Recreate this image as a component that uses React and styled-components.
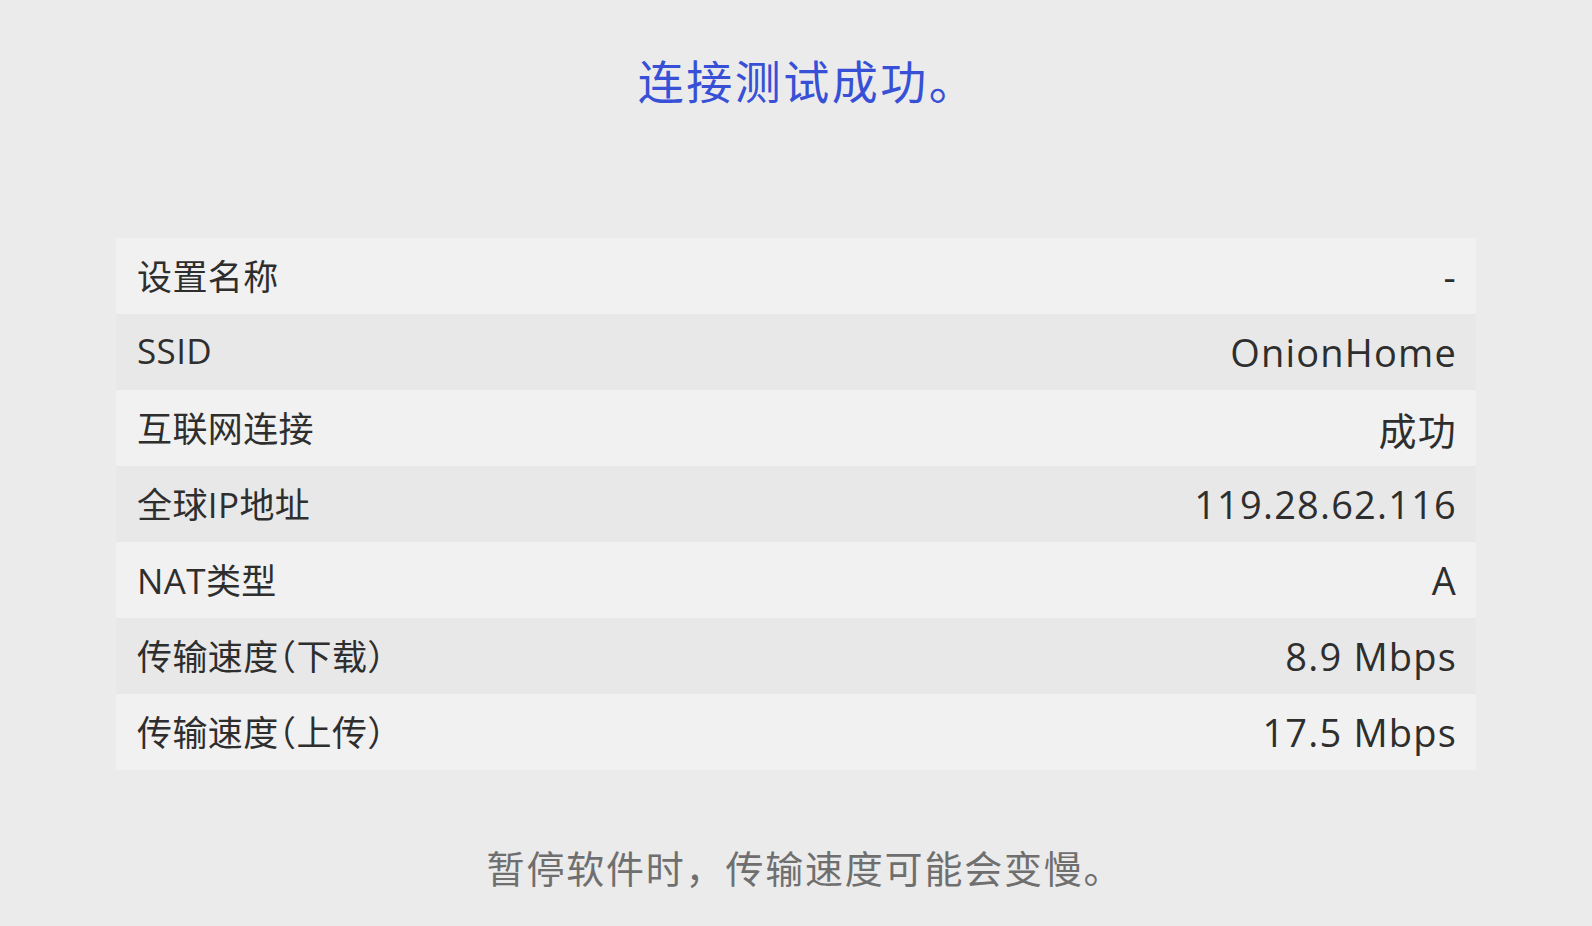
import React from "react";
import styled, { createGlobalStyle } from "styled-components";

const rows = [
  { label: "设置名称", value: "-" },
  { label: "SSID", value: "OnionHome" },
  { label: "互联网连接", value: "成功" },
  { label: "全球IP地址", value: "119.28.62.116" },
  { label: "NAT类型", value: "A" },
  { label: "传输速度（下载）", value: "8.9 Mbps" },
  { label: "传输速度（上传）", value: "17.5 Mbps" },
];

export default function App() {
  return (
    <>
      <GlobalStyle />
      <Page>
        <Title>连接测试成功。</Title>
        <Table>
          {rows.map((row, i) => (
            <Row key={row.label} $light={i % 2 === 0}>
              <Label>{row.label}</Label>
              <Value>{row.value}</Value>
            </Row>
          ))}
        </Table>
        <Note>暂停软件时，传输速度可能会变慢。</Note>
      </Page>
    </>
  );
}

const GlobalStyle = createGlobalStyle`
  body {
    margin: 0;
    background: #ebebeb;
    font-family: "Open Sans", "Noto Sans CJK SC", sans-serif;
  }
`;

const Page = styled.div`
  height: 926px;
  display: flex;
  flex-direction: column;
  align-items: center;
  background: #ebebeb;
  overflow: hidden;
`;

const Title = styled.h1`
  margin: 56px 0 0;
  padding-left: 23px;
  font-size: 46px;
  line-height: 47px;
  letter-spacing: 2.5px;
  font-weight: 400;
  color: #3850d6;
  font-family: "Noto Sans CJK SC", sans-serif;
`;

const Table = styled.div`
  margin-top: 135px;
  width: 1360px;
  display: flex;
  flex-direction: column;
`;

const Row = styled.div`
  height: 76px;
  display: flex;
  align-items: center;
  justify-content: space-between;
  padding: 0 20px 0 21px;
  box-sizing: border-box;
  background: ${(p) => (p.$light ? "#f1f1f1" : "#e8e8e8")};
  color: #2e2e2e;
`;

const Label = styled.span`
  font-size: 35px;
  letter-spacing: 0.4px;
  font-feature-settings: "halt";
  transform: translateY(-2px);
`;

const Value = styled.span`
  font-size: 38px;
  letter-spacing: 1.2px;
  margin-right: -1px;
`;

const Note = styled.p`
  margin: 78px 0 0;
  padding-left: 18px;
  font-size: 38px;
  line-height: 38px;
  letter-spacing: 1.8px;
  color: #6f6f6f;
  font-family: "Noto Sans CJK SC", sans-serif;
`;
